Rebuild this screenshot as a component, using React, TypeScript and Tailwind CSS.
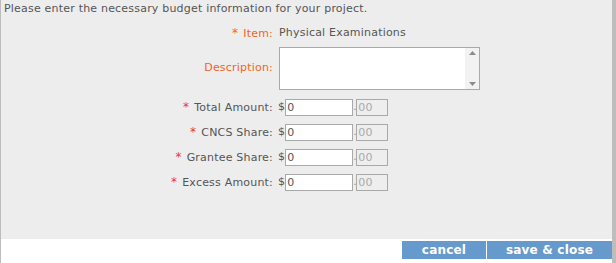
import React from "react";

const font = { fontFamily: '"DejaVu Sans", Verdana, sans-serif', letterSpacing: "0.2px" };

function AmountRow({ label }: { label: string }) {
  return (
    <div className="flex items-center h-[17px] mt-[8px]">
      <div className="w-[273px] text-right text-[#555] pr-[1px]">
        <span className="text-[#e8383d] mr-[5px] text-[12px]">*</span>
        {label}:
      </div>
      <div className="flex items-center ml-[4px] text-[#555]">
        <span>$</span>
        <input
          className="w-[68px] h-[17px] border border-[#a9a9a9] bg-white px-[1px] text-[11px] text-[#555] outline-none"
          style={font}
          defaultValue="0"
        />
        <span className="w-[3px] text-[#999]">.</span>
        <input
          className="w-[32px] h-[17px] border border-[#a9a9a9] bg-[#eeeeee] px-[1px] text-[11px] text-[#aaa] outline-none"
          style={font}
          defaultValue="00"
          disabled
        />
      </div>
    </div>
  );
}

export default function App() {
  return (
    <div className="w-[616px] h-[263px] bg-white flex flex-col text-[11px]" style={font}>
      <div className="flex flex-1 min-h-0">
        <div className="flex-1 bg-[#ededed] border-l border-[#bcbcbc] flex flex-col">
          <div className="pl-[3px] pt-[1px] leading-[16px] text-[#555]">
            Please enter the necessary budget information for your project.
          </div>
          <div className="flex items-center mt-[8px] h-[16px]">
            <div className="w-[273px] text-right text-[#f26522] pr-[1px]">
              <span className="mr-[5px] text-[12px]">*</span>Item:
            </div>
            <div className="ml-[5px] text-[#555]">Physical Examinations</div>
          </div>
          <div className="flex items-center mt-[6px]">
            <div className="w-[273px] text-right text-[#f26522] pr-[1px]">Description:</div>
            <div className="ml-[5px] w-[201px] h-[43px] border border-[#a9a9a9] bg-white flex">
              <div className="flex-1" />
              <div className="w-[14px] bg-[#f2f2f2] flex flex-col items-center justify-between py-[3px]">
                <svg width="7" height="4" viewBox="0 0 7 4">
                  <path d="M3.5 0 L7 4 L0 4 Z" fill="#8c8c8c" />
                </svg>
                <svg width="7" height="4" viewBox="0 0 7 4">
                  <path d="M0 0 L7 0 L3.5 4 Z" fill="#8c8c8c" />
                </svg>
              </div>
            </div>
          </div>
          <div className="h-[1px]" />
          <AmountRow label="Total Amount" />
          <AmountRow label="CNCS Share" />
          <AmountRow label="Grantee Share" />
          <AmountRow label="Excess Amount" />
        </div>
        <div className="w-[4px] bg-[#bdbdbd]" />
      </div>
      <div className="h-[24px] flex items-start">
        <div className="flex-1 border-l border-[#bcbcbc] h-full flex justify-end pt-[2px]">
          <button className="w-[84px] h-[18px] bg-[#6699cc] text-white font-bold text-[12px] leading-[18px]" style={font}>
            cancel
          </button>
          <div className="w-[1px]" />
          <button className="w-[125px] h-[18px] bg-[#6699cc] text-white font-bold text-[12px] leading-[18px]" style={font}>
            save &amp; close
          </button>
        </div>
        <div className="w-[4px] h-full bg-[#bdbdbd]" />
      </div>
    </div>
  );
}
